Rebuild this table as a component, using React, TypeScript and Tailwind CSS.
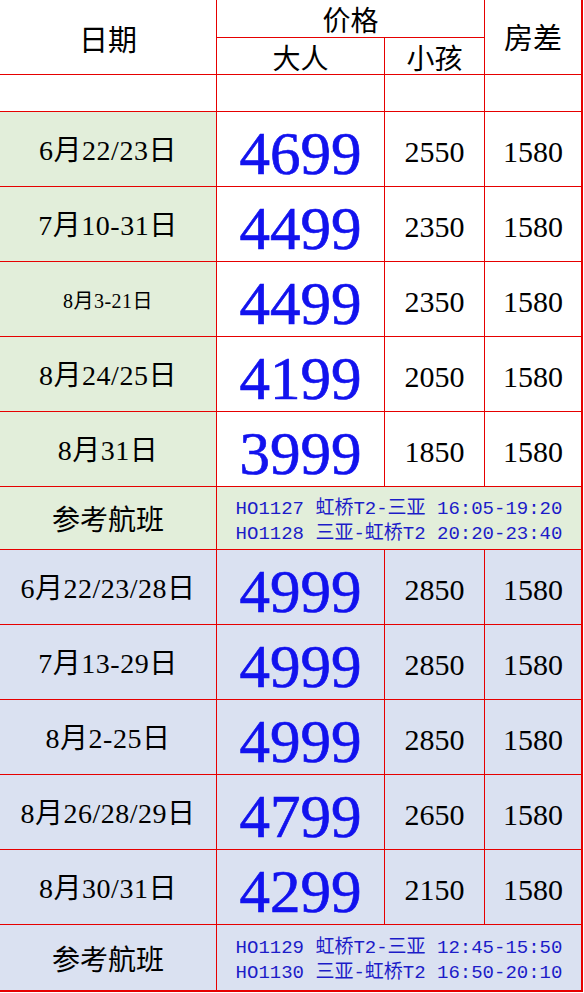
import React from 'react';

const RED = 'border-[#e60000]';

type Row = { date: string; small?: boolean; adult: string; child: string; room: string };

const summerA: Row[] = [
  { date: '6月22/23日', adult: '4699', child: '2550', room: '1580' },
  { date: '7月10-31日', adult: '4499', child: '2350', room: '1580' },
  { date: '8月3-21日', small: true, adult: '4499', child: '2350', room: '1580' },
  { date: '8月24/25日', adult: '4199', child: '2050', room: '1580' },
  { date: '8月31日', adult: '3999', child: '1850', room: '1580' },
];

const summerB: Row[] = [
  { date: '6月22/23/28日', adult: '4999', child: '2850', room: '1580' },
  { date: '7月13-29日', adult: '4999', child: '2850', room: '1580' },
  { date: '8月2-25日', adult: '4999', child: '2850', room: '1580' },
  { date: '8月26/28/29日', adult: '4799', child: '2650', room: '1580' },
  { date: '8月30/31日', adult: '4299', child: '2150', room: '1580' },
];

const serif = "font-['Liberation_Serif','Noto_Sans_CJK_SC',serif]";
const mono = "font-['Liberation_Mono','Noto_Sans_CJK_SC',monospace]";

function PriceRows({ rows, dateBg, restBg }: { rows: Row[]; dateBg: string; restBg: string }) {
  return (
    <>
      {rows.map((r) => (
        <React.Fragment key={r.date}>
          <div className={`h-[75px] flex items-center justify-center border-r border-b ${RED} ${dateBg} ${serif} text-black pt-1 tracking-[0.5px] ${r.small ? 'text-[20px]' : 'text-[28px]'}`}>
            {r.date}
          </div>
          <div className={`h-[75px] flex items-center justify-center border-r border-b ${RED} ${restBg} ${serif} text-[#1212ee] text-[61px] leading-none pt-2 [-webkit-text-stroke:0.7px_#1212ee]`}>
            {r.adult}
          </div>
          <div className={`h-[75px] flex items-center justify-center border-r border-b ${RED} ${restBg} ${serif} text-black text-[30px] pt-1`}>
            {r.child}
          </div>
          <div className={`h-[75px] flex items-center justify-center border-r-2 border-b ${RED} ${restBg} ${serif} text-black text-[30px] pt-1`}>
            {r.room}
          </div>
        </React.Fragment>
      ))}
    </>
  );
}

function FlightRow({ bg, lines, height, last }: { bg: string; lines: string[]; height: string; last?: boolean }) {
  return (
    <>
      <div className={`${height} flex items-center justify-center border-r ${last ? 'border-b-2' : 'border-b'} ${RED} ${bg} ${serif} text-black text-[28px] pt-[6px]`}>
        参考航班
      </div>
      <div className={`col-span-3 ${height} flex flex-col items-center justify-center border-r-2 ${last ? 'border-b-2' : 'border-b'} ${RED} ${bg} ${mono} text-[#1c1cc8] text-[19px] leading-[25px] pt-[7px]`}>
        {lines.map((l) => (
          <div key={l} className="whitespace-pre">{l}</div>
        ))}
      </div>
    </>
  );
}

export default function App() {
  const green = 'bg-[#e2eeda]';
  const blue = 'bg-[#dae1f1]';
  return (
    <div className="w-[584px] min-h-[993px] bg-white">
      <div className="grid grid-cols-[217px_168px_100px_98px] w-[583px]">
        {/* header */}
        <div className={`row-span-2 h-[75px] flex items-center justify-center border-r border-b ${RED} ${serif} text-[29px] text-black pt-[9px]`}>
          日期
        </div>
        <div className={`col-span-2 h-[38px] flex items-end justify-center border-r border-b ${RED} ${serif} text-[28px] leading-none text-black pb-[1px]`}>
          价格
        </div>
        <div className={`row-span-2 h-[75px] flex items-center justify-center border-r-2 border-b ${RED} ${serif} text-[29px] text-black pt-[5px]`}>
          房差
        </div>
        <div className={`h-[37px] flex items-end justify-center border-r border-b ${RED} ${serif} text-[28px] leading-none text-black`}>
          大人
        </div>
        <div className={`h-[37px] flex items-end justify-center border-r border-b ${RED} ${serif} text-[28px] leading-none text-black`}>
          小孩
        </div>

        {/* empty row */}
        <div className={`h-[37px] border-r border-b ${RED}`} />
        <div className={`h-[37px] border-r border-b ${RED}`} />
        <div className={`h-[37px] border-r border-b ${RED}`} />
        <div className={`h-[37px] border-r-2 border-b ${RED}`} />

        <PriceRows rows={summerA} dateBg={green} restBg="bg-white" />
        <FlightRow
          bg={green}
          height="h-[63px]"
          lines={['HO1127 虹桥T2-三亚 16:05-19:20', 'HO1128 三亚-虹桥T2 20:20-23:40']}
        />

        <PriceRows rows={summerB} dateBg={blue} restBg={blue} />
        <FlightRow
          bg={blue}
          height="h-[67px]"
          last
          lines={['HO1129 虹桥T2-三亚 12:45-15:50', 'HO1130 三亚-虹桥T2 16:50-20:10']}
        />
      </div>
    </div>
  );
}
